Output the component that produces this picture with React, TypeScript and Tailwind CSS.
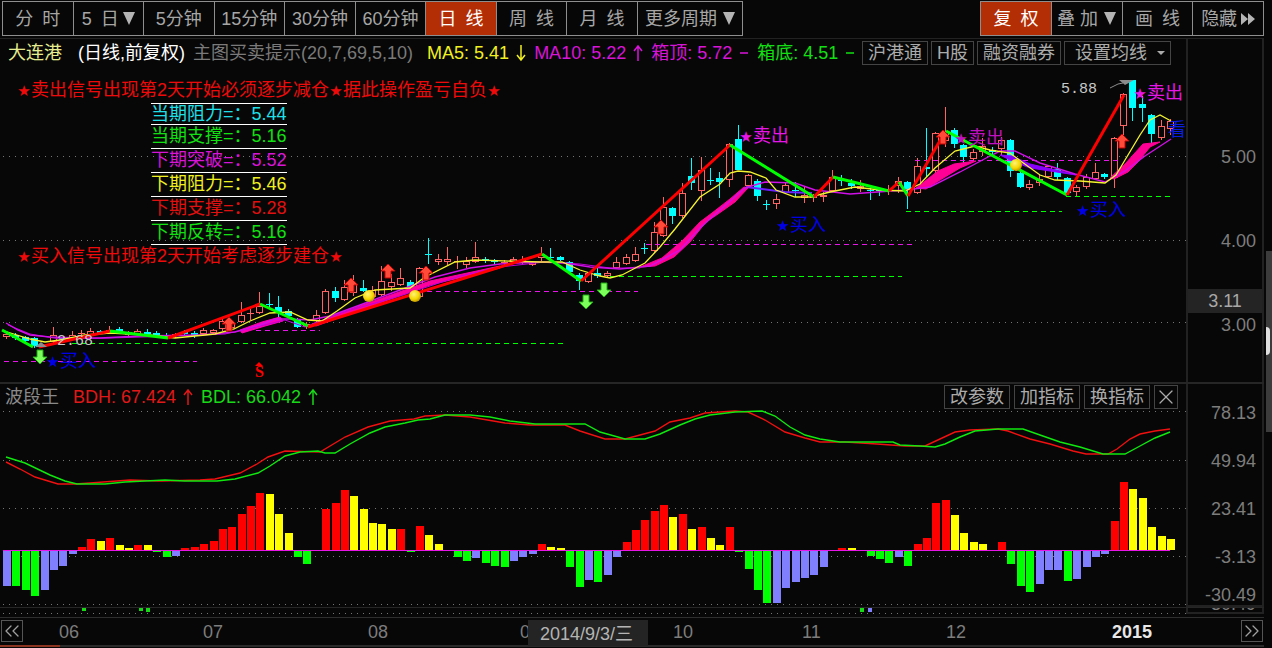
import clsx from "clsx";
import { ChevronsLeft, ChevronsRight, X } from "lucide-react";
import { useState } from "react";

type Point = [number, number];
// index, high, low, body top, body bottom, direction
type Candle = [number, number, number, number, number, "u" | "d"];

const WIDTH = 1186;
const STEP = 9.387;
const MAIN_TOP = 66;
const MAIN_HEIGHT = 316;
const SUB_TOP = 410;
const SUB_HEIGHT = 197;
const BASELINE = 550;

const RED = "#ff0000";
const GREEN = "#00ff00";
const MAGENTA = "#e815e8";

const periods = [
  "分\u2002时",
  "5\u2002日",
  "5分钟",
  "15分钟",
  "30分钟",
  "60分钟",
  "日\u2002线",
  "周\u2002线",
  "月\u2002线",
];

const levels = [
  { label: "当期阻力", value: "5.44", color: "text-[#1fe0e8]" },
  { label: "当期支撑", value: "5.16", color: "text-[#12e012]" },
  { label: "下期突破", value: "5.52", color: "text-[#d814d8]" },
  { label: "下期阻力", value: "5.46", color: "text-[#f0f020]" },
  { label: "下期支撑", value: "5.28", color: "text-[#e01010]" },
  { label: "下期反转", value: "5.16", color: "text-[#12e012]" },
];

const candles: Candle[] = [
  [0, 332, 339, 334, 337, "u"], [1, 333, 340, 335, 338, "d"], [2, 336, 343, 337, 341, "d"],
  [3, 337, 348, 338, 346, "d"], [5, 327, 343, 335, 342, "u"], [6, 337, 342, 338, 341, "d"],
  [7, 331, 341, 335, 339, "u"], [8, 330, 338, 333, 334, "u"], [9, 328, 336, 331, 335, "u"],
  [10, 330, 334, 331, 333, "d"], [11, 326, 334, 330, 332, "u"], [12, 327, 334, 329, 332, "d"],
  [13, 331, 336, 332, 335, "u"], [14, 329, 335, 331, 334, "u"], [15, 329, 335, 332, 334, "d"],
  [16, 331, 336, 333, 335, "d"], [17, 333, 338, 335, 337, "d"], [18, 333, 338, 334, 336, "u"],
  [19, 330, 336, 332, 334, "d"], [20, 331, 338, 333, 335, "d"], [21, 328, 336, 330, 334, "u"],
  [22, 329, 335, 330, 333, "u"], [23, 318, 331, 321, 329, "u"], [24, 319, 331, 323, 328, "u"],
  [25, 302, 323, 315, 322, "u"], [26, 309, 320, 313, 314, "u"], [27, 292, 314, 306, 313, "u"],
  [28, 293, 308, 304, 305, "d"], [29, 296, 320, 307, 312, "d"], [30, 309, 318, 311, 316, "d"],
  [31, 318, 328, 320, 327, "d"], [32, 322, 329, 324, 327, "u"], [33, 310, 322, 315, 321, "u"],
  [34, 289, 314, 291, 313, "u"], [35, 287, 302, 291, 298, "d"], [36, 280, 301, 287, 300, "u"],
  [37, 275, 296, 284, 293, "u"], [38, 280, 292, 288, 291, "d"], [39, 286, 300, 290, 297, "u"],
  [40, 266, 296, 281, 295, "u"], [41, 274, 291, 282, 287, "u"], [42, 268, 286, 278, 285, "u"],
  [43, 280, 291, 282, 290, "d"], [44, 267, 298, 268, 297, "u"], [45, 238, 264, 254, 255, "d"],
  [46, 254, 265, 259, 262, "u"], [47, 247, 265, 259, 262, "u"], [48, 256, 269, 261, 262, "u"],
  [49, 257, 268, 261, 265, "u"], [50, 242, 263, 257, 262, "u"], [51, 257, 263, 259, 261, "d"],
  [52, 259, 264, 260, 262, "d"], [53, 260, 265, 262, 263, "u"], [54, 257, 264, 259, 262, "u"],
  [55, 256, 265, 260, 263, "u"], [56, 261, 266, 262, 265, "u"], [57, 247, 261, 254, 258, "u"],
  [58, 248, 261, 257, 258, "d"], [59, 256, 261, 257, 260, "d"], [60, 261, 273, 262, 272, "d"],
  [61, 273, 290, 275, 281, "d"], [62, 272, 283, 273, 282, "u"], [63, 268, 278, 273, 276, "d"],
  [64, 271, 278, 273, 276, "u"], [65, 257, 269, 262, 268, "u"], [66, 254, 265, 257, 264, "u"],
  [67, 247, 262, 254, 261, "u"], [68, 243, 254, 248, 249, "d"], [69, 222, 253, 232, 251, "u"],
  [70, 197, 237, 207, 236, "u"], [71, 207, 224, 208, 216, "d"], [72, 183, 218, 193, 216, "u"],
  [73, 158, 190, 176, 183, "d"], [74, 157, 201, 170, 191, "u"], [75, 168, 185, 180, 181, "d"],
  [76, 172, 198, 178, 182, "d"], [77, 143, 187, 144, 180, "u"], [78, 125, 170, 139, 170, "d"],
  [79, 174, 187, 175, 186, "u"], [80, 179, 201, 181, 196, "d"], [81, 200, 210, 204, 205, "d"],
  [82, 194, 209, 199, 204, "u"], [83, 182, 194, 185, 193, "u"], [84, 182, 197, 190, 191, "d"],
  [85, 187, 203, 195, 198, "u"], [86, 194, 202, 196, 198, "u"], [87, 192, 202, 195, 197, "u"],
  [88, 170, 192, 177, 191, "u"], [89, 175, 186, 180, 181, "d"], [90, 179, 189, 183, 186, "d"],
  [91, 180, 192, 186, 189, "u"], [92, 188, 200, 190, 191, "d"], [93, 189, 196, 190, 191, "d"],
  [94, 185, 195, 190, 191, "u"], [95, 177, 193, 181, 186, "u"], [96, 181, 209, 182, 190, "d"],
  [97, 158, 194, 166, 193, "u"], [98, 128, 177, 167, 169, "d"], [99, 132, 173, 133, 171, "u"],
  [100, 107, 147, 131, 141, "u"], [101, 128, 148, 130, 144, "d"], [102, 144, 165, 145, 157, "d"],
  [103, 149, 161, 152, 159, "u"], [104, 138, 156, 146, 152, "u"], [105, 147, 155, 150, 152, "d"],
  [106, 137, 155, 140, 149, "u"], [107, 139, 177, 140, 171, "d"], [108, 171, 188, 173, 187, "d"],
  [109, 180, 190, 184, 188, "u"], [110, 175, 186, 179, 183, "u"], [111, 165, 178, 166, 177, "u"],
  [112, 163, 180, 169, 177, "d"], [113, 177, 195, 178, 193, "d"], [114, 185, 196, 187, 192, "u"],
  [115, 174, 189, 177, 187, "u"], [116, 163, 180, 172, 179, "u"], [117, 173, 179, 174, 177, "d"],
  [118, 137, 188, 138, 178, "u"], [119, 93, 138, 94, 126, "u"], [120, 80, 121, 80, 108, "d"],
  [121, 96, 122, 104, 108, "d"], [122, 114, 143, 115, 134, "d"], [123, 120, 140, 126, 138, "u"],
  [124, 119, 135, 121, 129, "u"],
];

// trend legs, alternating up (red) and down (green)
const legs: [Point, Point, string][] = [
  [[2, 330], [33, 347], GREEN],
  [[39, 347], [110, 331], RED],
  [[110, 331], [168, 338], GREEN],
  [[168, 338], [260, 304], RED],
  [[260, 304], [308, 326], GREEN],
  [[308, 327], [542, 254], RED],
  [[542, 254], [581, 281], GREEN],
  [[581, 281], [730, 145], RED],
  [[730, 145], [814, 197], GREEN],
  [[814, 197], [833, 177], RED],
  [[833, 177], [889, 191], GREEN],
  [[889, 191], [899, 182], RED],
  [[899, 182], [908, 196], GREEN],
  [[908, 196], [945, 132], RED],
  [[946, 131], [1067, 195], GREEN],
  [[1067, 195], [1124, 95], RED],
];

// x1, x2, y, color
const boxLines: [number, number, number, string][] = [
  [4, 197, 361, MAGENTA],
  [72, 563, 343, GREEN],
  [256, 320, 330, MAGENTA],
  [418, 638, 291, MAGENTA],
  [610, 902, 276, GREEN],
  [646, 912, 244, MAGENTA],
  [906, 1062, 211, GREEN],
  [915, 1122, 160, MAGENTA],
  [1066, 1174, 196, GREEN],
];

const ma5: Point[] = [
  [4, 331], [30, 339], [45, 342], [60, 340], [85, 335], [110, 333], [150, 335], [175, 338],
  [215, 334], [234, 329], [250, 321], [270, 313], [290, 312], [308, 320], [322, 321], [337, 311],
  [355, 298], [375, 290], [410, 288], [425, 277], [455, 262], [475, 260], [540, 262], [562, 262],
  [580, 270], [600, 276], [610, 278], [622, 275], [645, 263], [660, 247], [675, 229], [700, 197],
  [720, 184], [730, 173], [738, 171], [750, 172], [766, 178], [776, 190], [795, 197], [810, 197],
  [830, 192], [855, 187], [880, 190], [905, 191], [920, 184], [935, 168], [955, 151], [975, 146],
  [990, 150], [1010, 153], [1022, 162], [1040, 175], [1055, 180], [1080, 181], [1105, 183],
  [1116, 175], [1125, 160], [1140, 135], [1150, 120], [1160, 115], [1171, 121],
];

const ma10: Point[] = [
  [6, 323], [18, 330], [30, 335], [50, 337], [80, 338], [100, 338], [140, 336], [200, 335],
  [235, 332], [260, 325], [275, 319], [290, 319], [310, 320], [330, 316], [360, 305], [400, 290],
  [435, 277], [470, 268], [500, 264], [540, 262], [565, 263], [590, 267], [620, 269], [650, 266],
  [680, 250], [700, 228], [720, 210], [745, 188], [765, 182], [795, 183], [815, 190], [850, 194],
  [905, 190], [930, 187], [960, 172], [975, 164], [990, 156], [1000, 151], [1015, 151],
  [1040, 163], [1075, 174], [1105, 182], [1125, 171], [1145, 156], [1171, 139],
];

const ma20: Point[] = [
  [8, 325], [30, 334], [60, 339], [110, 338], [175, 336], [225, 334], [260, 326], [285, 320],
  [305, 327], [340, 313], [400, 296], [460, 276], [500, 267], [545, 262], [580, 264], [610, 268],
  [640, 268],
];

// filled ribbons between the slow averages
const ribbons: { points: Point[]; color: string }[] = [
  {
    points: [[240, 330], [262, 322], [280, 317], [283, 321], [265, 326], [242, 333]],
    color: "#ff00b4",
  },
  {
    points: [[312, 324], [360, 306], [430, 281], [500, 266], [500, 268], [430, 285], [360, 310], [316, 326]],
    color: "#ff00a0",
  },
  {
    points: [
      [640, 267], [662, 258], [682, 241], [700, 222], [712, 213], [730, 199], [744, 187],
      [748, 188], [735, 202], [718, 214], [706, 222], [690, 242], [674, 257], [655, 266],
    ],
    color: "#ff0096",
  },
  {
    points: [[916, 188], [938, 171], [954, 164], [976, 161], [960, 168], [940, 180], [926, 189]],
    color: "#ff0096",
  },
  {
    points: [[1110, 178], [1125, 164], [1143, 144], [1160, 142], [1150, 147], [1138, 162], [1128, 172], [1114, 179]],
    color: "#ff0096",
  },
  {
    points: [[1000, 155], [1012, 156], [1030, 164], [1056, 170], [1076, 175], [1050, 171], [1030, 168], [1012, 161]],
    color: "#8a00ff",
  },
];

const violet: Point[] = [[746, 187], [762, 189], [785, 192], [812, 193]];

const upArrows: Point[] = [[229, 324], [351, 285], [388, 271], [426, 273], [661, 227], [943, 137], [1122, 141]];
const downArrows: Point[] = [[40, 357], [586, 302], [604, 290]];
const balls: Point[] = [[369, 296], [415, 296], [1016, 165]];

const signals = [
  { x: 46, y: 361, text: "买入", color: "text-[#0000e8]" },
  { x: 739, y: 136, text: "卖出", color: "text-[#e815e8]" },
  { x: 776, y: 225, text: "买入", color: "text-[#0000e8]" },
  { x: 954, y: 138, text: "卖出", color: "text-[#c010c0]" },
  { x: 1076, y: 210, text: "买入", color: "text-[#0000e8]" },
  { x: 1133, y: 93, text: "卖出", color: "text-[#e815e8]" },
];

const bdh: Point[] = [
  [6, 462], [20, 469], [35, 477], [58, 484], [75, 484], [90, 483], [130, 480], [160, 481],
  [200, 480], [215, 479], [240, 473], [257, 464], [268, 457], [285, 451], [320, 452], [345, 437],
  [368, 427], [390, 421], [414, 419], [425, 416], [445, 415], [470, 417], [505, 423], [530, 425],
  [565, 425], [580, 431], [605, 439], [625, 439], [655, 431], [670, 422], [690, 418], [705, 413],
  [735, 411], [748, 412], [765, 420], [785, 432], [805, 438], [820, 442], [845, 442], [877, 444],
  [905, 446], [925, 446], [940, 439], [955, 432], [970, 430], [998, 429], [1008, 431], [1030, 439],
  [1050, 444], [1073, 451], [1086, 454], [1108, 454], [1117, 449], [1130, 439], [1140, 434],
  [1155, 431], [1170, 429],
];

const bdl: Point[] = [
  [6, 457], [25, 463], [50, 475], [65, 481], [77, 484], [105, 484], [125, 482], [165, 480],
  [185, 481], [217, 481], [235, 479], [258, 473], [270, 466], [285, 456], [300, 452], [318, 451],
  [325, 453], [335, 453], [350, 444], [370, 433], [385, 427], [405, 423], [418, 420], [430, 419],
  [445, 415], [470, 415], [490, 417], [510, 421], [535, 424], [585, 424], [600, 432], [625, 439],
  [645, 439], [660, 434], [680, 425], [695, 419], [710, 415], [735, 412], [762, 411], [775, 416],
  [790, 427], [805, 435], [820, 439], [840, 442], [893, 442], [900, 445], [920, 446], [935, 447],
  [945, 444], [960, 437], [975, 431], [998, 429], [1023, 429], [1040, 435], [1060, 442],
  [1080, 447], [1103, 454], [1125, 454], [1140, 446], [1155, 438], [1170, 432],
];

// r = rising, y = fading, g = falling, b = recovering
const histogram =
  "-36b -36g -40g -46g -40b -20b -16b -4b 3r 11r 9y 12r 5y 2y 5r 5y -2g -7g -6b 2r 3r 6r 9r 21r 23r " +
  "36r 44r 57r 56y 36y 17y -7g -14g -1b 41r 47r 60r 54y 41y 27y 26y 21y 21r -2g 24r 15y 6y -1g -7g -11g " +
  "-8b -13g -16g -17g -11b -7b -4b 6r 3y 2y -17g -37g -30b -32g -25b -7b 8r 20r 30r 39r 45r 33y 36r 21y 23r " +
  "12y 5y 23r -2g -19g -40g -53g -53b -38b -32b -28b -25b -17b -1b 2r 2y -1g -6g -9g -13g -7b -16g 6r 12r 47r " +
  "50r 35y 17y 8y 6y -1g 8r -14g -36g -42g -34b -20b -20b -31g -29b -17b -7b -4b 29r 68r 61y 52y 23y 14y 11y";

const barColors: Record<string, string> = {
  r: "#ff0000",
  y: "#ffff00",
  g: "#00ff00",
  b: "#8080ff",
};

const toPoints = (points: Point[]) => points.map((p) => p.join(",")).join(" ");

const Triangle = () => (
  <svg className="w-3 h-3.5 shrink-0" viewBox="0 0 12 14" aria-hidden="true">
    <path d="M0 0h12L6 13z" fill="#b4b4b4" />
  </svg>
);

const marks = {
  up: "M5 17V2M1 7l4-5 4 5",
  down: "M5 1v15M1 11l4 5 4-5",
  flat: "M1 9h8",
};

const Mark = ({ type }: { type: keyof typeof marks }) => (
  <svg
    className="w-2.5 h-[18px] shrink-0"
    viewBox="0 0 10 18"
    fill="none"
    stroke="currentColor"
    strokeWidth="1.5"
    role="img"
    aria-label={type}
  >
    <path d={marks[type]} />
  </svg>
);

const Reading = ({
  children,
  mark,
  color,
}: {
  children: React.ReactNode;
  mark: keyof typeof marks;
  color: string;
}) => (
  <span className={clsx("flex items-center gap-[7px]", color)}>
    {children}
    <Mark type={mark} />
  </span>
);

const Star = () => (
  <span className="inline-block w-3.5 text-center text-[15px] font-['DejaVu_Sans']">★</span>
);

const GridLine = ({ y }: { y: number }) => (
  <line x1="3" x2={WIDTH} y1={y + 0.5} y2={y + 0.5} stroke="#747474" strokeDasharray="1 5" />
);

const Chip = ({ children }: { children: React.ReactNode }) => (
  <button className="h-6 px-[5px] flex items-center border border-[#444] text-[#ababab] hover:border-[#777]">
    {children}
  </button>
);

const PriceChart = () => (
  <div className="relative overflow-hidden">
    <svg
      className="block w-full h-[316px]"
      viewBox={`0 ${MAIN_TOP} ${WIDTH} ${MAIN_HEIGHT}`}
      preserveAspectRatio="none"
      fill="none"
      role="img"
      aria-label="大连港 日线"
    >
      <g shapeRendering="crispEdges">
        {[156, 240, 322].map((y) => (
          <GridLine key={y} y={y} />
        ))}
        {candles.map(([i, high, low, top, bottom, dir]) => {
          const x = Math.round(6 + i * STEP);
          const color = dir === "u" ? "#ff6464" : "#00ffff";
          return (
            <g key={i} stroke={color}>
              <path d={`M${x + 0.5} ${high}V${low}`} />
              {bottom - top < 2 ? (
                <path d={`M${x - 3} ${top + 0.5}H${x + 4}`} />
              ) : (
                <rect
                  x={x - 2.5}
                  y={top + 0.5}
                  width="6"
                  height={bottom - top - 1}
                  fill={dir === "u" ? "#070707" : color}
                />
              )}
            </g>
          );
        })}
        {boxLines.map(([x1, x2, y, color]) => (
          <line
            key={`${x1}-${y}`}
            x1={x1}
            x2={x2}
            y1={y + 0.5}
            y2={y + 0.5}
            stroke={color}
            strokeDasharray="5 4"
          />
        ))}
      </g>

      {ribbons.map((r) => (
        <polygon key={r.points[0][0]} points={toPoints(r.points)} fill={r.color} stroke={r.color} />
      ))}
      <polyline points={toPoints(ma20)} stroke="#c000d8" />
      <polyline points={toPoints(violet)} stroke="#6a20ff" strokeWidth="2" />
      <polyline points={toPoints(ma10)} stroke="#d010e8" strokeWidth="1.4" />
      <polyline points={toPoints(ma5)} stroke="#f4f430" strokeWidth="1.3" />
      {legs.map(([a, b, color]) => (
        <line key={a[0]} x1={a[0]} y1={a[1]} x2={b[0]} y2={b[1]} stroke={color} strokeWidth="3" />
      ))}

      {upArrows.map(([x, y]) => (
        <path
          key={x}
          d={`M${x} ${y - 7}l7 7h-4v7h-6v-7h-4z`}
          fill="#ff4a3a"
          stroke="#c80000"
        />
      ))}
      {downArrows.map(([x, y]) => (
        <path
          key={x}
          d={`M${x} ${y + 7}l7 -7h-4v-7h-6v7h-4z`}
          fill="#7cff5a"
          stroke="#1fae10"
        />
      ))}
      <defs>
        <radialGradient id="ball" cx="0.4" cy="0.35" r="0.7">
          <stop offset="0" stopColor="#fff27a" />
          <stop offset="0.6" stopColor="#f5d800" />
          <stop offset="1" stopColor="#b88a00" />
        </radialGradient>
      </defs>
      {balls.map(([x, y]) => (
        <circle key={x} cx={x} cy={y} r="6" fill="url(#ball)" />
      ))}

      {/* extreme price pointers */}
      <path d="M35 347l6-5 6 5z" fill="#8c8c8c" />
      <path d="M1110 88l8-4 5-1 3-3" stroke="#8c8c8c" />
      <path d="M1119 80h15l-9 5z" fill="#8c8c8c" />
      <path d="M255 366l4-4 4 4z" fill="#ff0000" />
    </svg>

    <p className="absolute left-[17px] top-3 leading-6 text-[#ee0a0a] whitespace-nowrap">
      <Star />
      卖出信号出现第2天开始必须逐步减仓
      <Star />
      据此操作盈亏自负
      <Star />
    </p>
    <table className="absolute left-[151px] top-[37px] border-t border-white">
      <tbody>
        {levels.map((level, i) => (
          <tr key={level.label} className={clsx("border-b border-white", level.color)}>
            <th
              scope="row"
              className={clsx("p-0 font-normal text-left", i === 0 ? "leading-5" : "leading-[23px]")}
            >
              {level.label}=：
            </th>
            <td className={clsx("p-0", i === 0 ? "leading-5" : "leading-[23px]")}>
              {level.value}
            </td>
          </tr>
        ))}
      </tbody>
    </table>
    <p className="absolute left-[17px] top-[178px] leading-6 text-[#ee0a0a] whitespace-nowrap">
      <Star />
      买入信号出现第2天开始考虑逐步建仓
      <Star />
    </p>

    {signals.map((s) => (
      <span
        key={s.x}
        className={clsx("absolute leading-6 -mt-3 whitespace-nowrap", s.color)}
        style={{ left: `${(s.x / WIDTH) * 100}%`, top: s.y - MAIN_TOP }}
      >
        <Star />
        {s.text}
      </span>
    ))}
    <span className="absolute right-0 leading-6 -mt-3 text-[#0a1ee0]" style={{ top: 130 - MAIN_TOP }}>
      看
    </span>
    <span
      className="absolute leading-5 -mt-2.5 text-[15px] font-['Liberation_Mono'] text-[#c8c8c8]"
      style={{ left: `${(57 / WIDTH) * 100}%`, top: 342 - MAIN_TOP }}
    >
      2.68
    </span>
    <span
      className="absolute leading-5 -mt-2.5 text-[15px] font-['Liberation_Mono'] text-[#c8c8c8]"
      style={{ left: `${(1061 / WIDTH) * 100}%`, top: 90 - MAIN_TOP }}
    >
      5.88
    </span>
    <span
      className="absolute leading-5 -mt-2.5 text-base font-bold font-['Liberation_Serif'] text-[#ff0000]"
      style={{ left: `${(255 / WIDTH) * 100}%`, top: 372 - MAIN_TOP }}
    >
      S
    </span>
  </div>
);

const WaveChart = () => (
  <svg
    className="block w-full h-[197px]"
    viewBox={`0 ${SUB_TOP} ${WIDTH} ${SUB_HEIGHT}`}
    preserveAspectRatio="none"
    fill="none"
    role="img"
    aria-label="波段王"
  >
    <g shapeRendering="crispEdges">
      {[411, 460, 508, 556, 604].map((y) => (
        <GridLine key={y} y={y} />
      ))}
      {histogram.split(" ").map((bar, i) => {
        const value = parseInt(bar);
        return (
          <rect
            key={i}
            x={Math.round(3 + i * STEP)}
            y={value > 0 ? BASELINE - value : BASELINE}
            width="8"
            height={Math.abs(value)}
            fill={barColors[bar.slice(-1)]}
          />
        );
      })}
      <line x1="3" x2="1170" y1="550.5" y2="550.5" stroke={MAGENTA} />
    </g>
    <polyline points={toPoints(bdh)} stroke="#f01010" strokeWidth="1.4" />
    <polyline points={toPoints(bdl)} stroke="#10e810" strokeWidth="1.4" />
  </svg>
);

const App = () => {
  const [period, setPeriod] = useState("日\u2002线");

  return (
    <main className="min-h-screen flex bg-[#070707] text-lg leading-6 font-['Liberation_Sans','Noto_Sans_CJK_SC',sans-serif]">
      <div className="flex-1 min-w-0 flex flex-col">
        {/* Toolbar */}
        <nav className="flex justify-between pt-px pl-0.5 pb-0.5 border-b border-[#222]">
          <div className="flex w-[741px] h-[35px] border-y border-l border-[#8e8e8e] text-[#a6a6a6]">
            {periods.map((p) => (
              <button
                key={p}
                onClick={() => setPeriod(p)}
                className={clsx(
                  "flex-[2] min-w-0 flex items-center justify-center gap-1 border-r border-[#8e8e8e] whitespace-nowrap",
                  period === p && "bg-[#b42e05] text-white"
                )}
              >
                {p}
                {p === "5\u2002日" && <Triangle />}
              </button>
            ))}
            <button className="flex-[3] min-w-0 flex items-center justify-center gap-1.5 border-r border-[#8e8e8e] whitespace-nowrap">
              更多周期
              <Triangle />
            </button>
          </div>
          <div className="grid grid-cols-4 w-[284px] h-[35px] border-y border-l border-[#8e8e8e] text-[#a6a6a6] *:flex *:items-center *:justify-center *:border-r *:border-[#8e8e8e]">
            <button className="bg-[#b42e05] text-white">复{"\u2002"}权</button>
            <button className="gap-1.5">
              叠 加
              <Triangle />
            </button>
            <button>画{"\u2002"}线</button>
            <button className="gap-1">
              隐藏
              <svg className="w-3.5 h-3" viewBox="0 0 14 12" fill="#b4b4b4" aria-hidden="true">
                <path d="M0 0l7 6-7 6zM7 0l7 6-7 6z" />
              </svg>
            </button>
          </div>
        </nav>

        {/* Price panel */}
        <section className="flex border-b-2 border-[#262626]">
          <div className="flex-1 min-w-0">
            <header className="h-[27px] flex items-center pl-2 pr-[15px] whitespace-nowrap">
              <h1 className="mr-4 text-[#e6ee90]">大连港</h1>
              <span className="text-white mr-2">(日线,前复权)</span>
              <span className="text-[#7a7a7a]">主图买卖提示(20,7,69,5,10)</span>
              <div className="flex gap-2 ml-3.5">
                <Reading color="text-[#f0f020]" mark="down">
                  MA5: 5.41
                </Reading>
                <Reading color="text-[#d814d8]" mark="up">
                  MA10: 5.22
                </Reading>
                <Reading color="text-[#d814d8]" mark="flat">
                  箱顶: 5.72
                </Reading>
                <Reading color="text-[#12e012]" mark="flat">
                  箱底: 4.51
                </Reading>
              </div>
              <div className="flex gap-[3px] ml-auto">
                <Chip>沪港通</Chip>
                <Chip>H股</Chip>
                <Chip>融资融券</Chip>
                <div className="relative">
                  <select
                    aria-label="设置均线"
                    className="appearance-none h-6 w-[107px] pl-2.5 border border-[#444] bg-[#070707] text-[#ababab] leading-5"
                  >
                    <option>设置均线</option>
                  </select>
                  <svg
                    className="absolute right-1.5 top-2.5 w-2 h-1 pointer-events-none"
                    viewBox="0 0 8 4"
                    aria-hidden="true"
                  >
                    <path d="M0 0h8L4 4z" fill="#ababab" />
                  </svg>
                </div>
              </div>
            </header>
            <PriceChart />
          </div>
          <aside className="w-[78px] pt-[106px] border-x-2 border-[#222] text-right text-[#7d7d7d]">
            <p className="pr-1.5">5.00</p>
            <p className="pr-1.5 mt-[60px]">4.00</p>
            <p className="mt-9 text-center bg-[#242424] text-[#a8a8a8]">3.11</p>
            <p className="pr-1.5">3.00</p>
          </aside>
        </section>

        {/* Indicator panel */}
        <section className="flex border-b border-[#262626]">
          <div className="flex-1 min-w-0">
            <header className="h-[26px] flex items-center pl-[5px] pr-2 whitespace-nowrap">
              <h2 className="mr-3.5 text-[#8a8a8a]">波段王</h2>
              <div className="flex gap-2">
                <Reading color="text-[#e01818]" mark="up">
                  BDH: 67.424
                </Reading>
                <Reading color="text-[#18d818]" mark="up">
                  BDL: 66.042
                </Reading>
              </div>
              <div className="flex gap-1 ml-auto">
                <Chip>改参数</Chip>
                <Chip>加指标</Chip>
                <Chip>换指标</Chip>
                <button
                  aria-label="关闭"
                  className="w-6 h-6 flex items-center justify-center border border-[#444] text-[#ababab] hover:border-[#777]"
                >
                  <X className="size-6 shrink-0" strokeWidth={1.2} />
                </button>
              </div>
            </header>
            <WaveChart />
          </div>
          <aside className="w-[78px] pt-[17px] pr-1.5 border-2 border-t-0 border-[#222] text-right text-[#7d7d7d]">
            <p>78.13</p>
            <p className="mt-6">49.94</p>
            <p className="mt-6">23.41</p>
            <p className="mt-6">-3.13</p>
            <p className="mt-4 leading-5">-30.49</p>
          </aside>
        </section>

        {/* Collapsed indicator */}
        <section className="flex h-[9px] overflow-hidden">
          <svg
            className="flex-1 min-w-0 h-full"
            viewBox={`0 0 ${WIDTH} 9`}
            preserveAspectRatio="none"
            shapeRendering="crispEdges"
            aria-hidden="true"
          >
            <GridLine y={5} />
            <path d="M82 0h4v3h-4zM139 0h4v3h-4zM146 0h4v4h-4zM860 0h4v4h-4z" fill="#18d818" />
            <path d="M868 0h4v4h-4z" fill="#8080ff" />
          </svg>
          <div className="w-[78px] h-1.5 flex items-end justify-end pr-1.5 border-2 border-t-0 border-[#222] leading-4 text-[#7d7d7d] overflow-hidden">
            <span>-30.49</span>
          </div>
        </section>

        {/* Time axis */}
        <footer className="relative grid grid-cols-[55fr_144fr_165fr_152fr_153fr_129fr_144fr_166fr_156fr] h-7 border-t border-[#2e2e2e] text-[#7d7d7d]">
          <div className="pt-0.5 pl-px">
            <button
              aria-label="向左"
              className="w-[22px] h-[22px] flex items-center justify-center border border-[#555] text-[#a0a0a0]"
            >
              <ChevronsLeft className="size-6 shrink-0" strokeWidth={1.3} />
            </button>
          </div>
          {["06", "07", "08", "09", "10", "11", "12"].map((month) => (
            <span key={month} className="pl-1 leading-7">
              {month}
            </span>
          ))}
          <div className="flex justify-between pl-1 pt-0.5 pr-px">
            <span className="font-bold text-[#e8e8e8]">2015</span>
            <button
              aria-label="向右"
              className="w-[22px] h-[22px] flex items-center justify-center border border-[#555] text-[#a0a0a0]"
            >
              <ChevronsRight className="size-6 shrink-0" strokeWidth={1.3} />
            </button>
          </div>
          <time
            dateTime="2014-09-03"
            className="absolute left-[528px] top-0.5 w-[120px] h-[26px] pl-3 leading-7 bg-[#242424] text-[#b4b4b4]"
          >
            2014/9/3/三
          </time>
        </footer>
        <div className="h-0.5 bg-[#2a2a2a]">
          <div className="w-[60px] h-full bg-[#8c3420]" />
        </div>
      </div>

      {/* Scroll rail */}
      <div className="w-2 pt-[251px] pl-0.5">
        <div className="h-[181px] pt-[76px] bg-[#3c3c3c]">
          <div className="w-1 h-7 rounded-r-full bg-[#e0e0e0]" />
        </div>
      </div>
    </main>
  );
};

export default App;
